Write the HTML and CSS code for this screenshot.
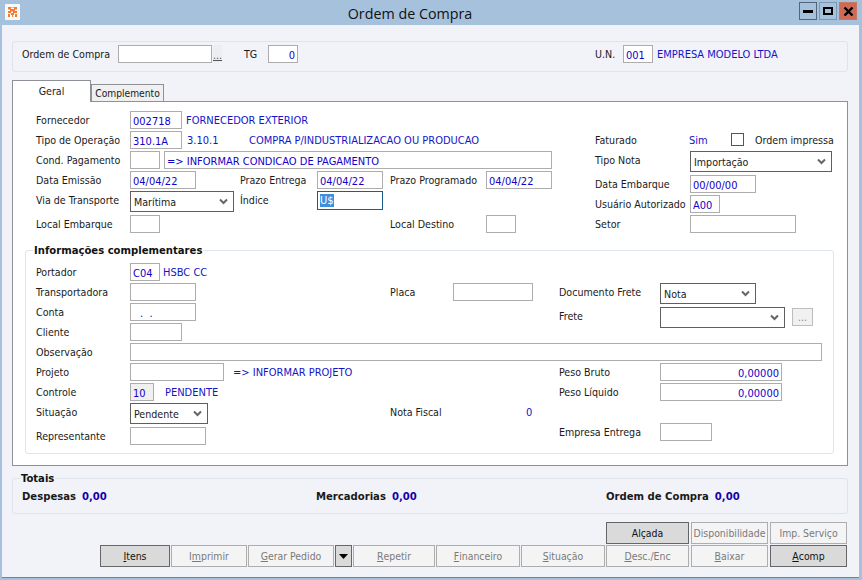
FILE: index.html
```html
<!DOCTYPE html>
<html lang="pt-BR">
<head>
<meta charset="utf-8">
<title>Ordem de Compra</title>
<link rel="stylesheet" href="styles.css">
</head>
<body>
<div class="window">
  <header class="titlebar">
    <svg class="appicon" width="15" height="16" viewBox="0 0 15 16">
      <rect x="0" y="0" width="15" height="16" rx="1" fill="#f7f9fb"/>
      <path d="M3 3h3v2H3zM9 3h3v2H9zM5 5h5v2H5zM3 7h3v2H3zM8 7h4v2H8zM6 9h3v2H6zM3 10h2v3H3zM7 11h1v2H7zM10 10h2v3h-2z" fill="#f47c30"/>
      <path d="M6 3h3v1H6zM3 5h2v1H3zM10 5h2v1h-2zM6 7h2v1H6z" fill="#fbb98c"/>
    </svg>
    <h1 class="title">Ordem de Compra</h1>
    <div class="winbtns">
      <div class="winbtn winbtn-active"><svg width="10" height="3" viewBox="0 0 10 3"><rect width="10" height="3" fill="#000"/></svg></div>
      <div class="winbtn"><svg width="10" height="8" viewBox="0 0 10 8"><path d="M0 0h10v8H0zM2 2v4h6V2z" fill="#000" fill-rule="evenodd"/></svg></div>
      <div class="winbtn winbtn-close"><svg width="11" height="9" viewBox="0 0 11 9"><path d="M1.500 .5 9.500 8.500M9.500 .5 1.500 8.500" fill="none" stroke="#000" stroke-width="2.400"/></svg></div>
    </div>
  </header>

  <main class="body">
    <section class="group topgroup">
      <span class="lbl l96">Ordem de Compra</span>
      <div class="field w94"></div>
      <span class="dots">...</span>
      <span class="lbl l24 mtg">TG</span>
      <div class="field w30 right">0</div>
      <span class="lbl l28 mun">U.N.</span>
      <div class="field w30">001</div>
      <span class="val ml4">EMPRESA MODELO LTDA</span>
    </section>

    <nav class="tabs">
      <div class="tab tab-active">Geral</div>
      <div class="tab">Complemento</div>
    </nav>

    <section class="panel">
      <div class="upper">
        <div class="upper-left">
          <div class="row"><span class="lbl l94">Fornecedor</span><div class="field w52">002718</div><span class="val ml4">FORNECEDOR EXTERIOR</span></div>
          <div class="row"><span class="lbl l94">Tipo de Operação</span><div class="field w52">310.1A</div><span class="val ml5 l62">3.10.1</span><span class="val">COMPRA P/INDUSTRIALIZACAO OU PRODUCAO</span></div>
          <div class="row"><span class="lbl l94">Cond. Pagamento</span><div class="field w30"></div><div class="field w388 ml4">=&gt; INFORMAR CONDICAO DE PAGAMENTO</div></div>
          <div class="row"><span class="lbl l94">Data Emissão</span><div class="field w66">04/04/22</div><span class="lbl l77 ml44">Prazo Entrega</span><div class="field w66">04/04/22</div><span class="lbl l96 ml7">Prazo Programado</span><div class="field w66">04/04/22</div></div>
          <div class="row row-tall"><span class="lbl l94">Via de Transporte</span><div class="select w104">Marítima<svg class="chev" width="9" height="7" viewBox="0 0 9 7"><path d="M1 1.500 4.500 5 8 1.500" fill="none" stroke="#666" stroke-width="2"/></svg></div><span class="lbl l77 ml6">Índice</span><div class="field w66 focus"><span class="sel">U$</span></div></div>
          <div class="row"><span class="lbl l94">Local Embarque</span><div class="field w30"></div><span class="lbl l96 mlocal">Local Destino</span><div class="field w30"></div></div>
        </div>
        <div class="upper-right">
          <div class="row"><span class="lbl l94">Faturado</span><span class="val l42">Sim</span><div class="check"></div><span class="lbl ml11">Ordem impressa</span></div>
          <div class="row row-tall"><span class="lbl l95">Tipo Nota</span><div class="select w142">Importação<svg class="chev" width="9" height="7" viewBox="0 0 9 7"><path d="M1 1.500 4.500 5 8 1.500" fill="none" stroke="#666" stroke-width="2"/></svg></div></div>
          <div class="row"><span class="lbl l95">Data Embarque</span><div class="field w66">00/00/00</div></div>
          <div class="row"><span class="lbl l95">Usuário Autorizado</span><div class="field w30">A00</div></div>
          <div class="row"><span class="lbl l95">Setor</span><div class="field w106"></div></div>
        </div>
      </div>

      <fieldset class="complement">
        <legend>Informações complementares</legend>
        <div class="columns">
          <div class="col col-left">
            <div class="row"><span class="lbl l94">Portador</span><div class="field w30">C04</div><span class="val ml3">HSBC CC</span></div>
            <div class="row"><span class="lbl l94">Transportadora</span><div class="field w66"></div></div>
            <div class="row"><span class="lbl l94">Conta</span><div class="field w66 conta">. &nbsp;.</div></div>
            <div class="row"><span class="lbl l94">Cliente</span><div class="field w52"></div></div>
          </div>
          <div class="col col-mid">
            <div class="row"><span class="lbl l63">Placa</span><div class="field w80"></div></div>
          </div>
          <div class="col col-right">
            <div class="row row-tall"><span class="lbl l101">Documento Frete</span><div class="select w96">Nota<svg class="chev" width="9" height="7" viewBox="0 0 9 7"><path d="M1 1.500 4.500 5 8 1.500" fill="none" stroke="#666" stroke-width="2"/></svg></div></div>
            <div class="row"><span class="lbl l101">Frete</span><div class="select w125">&nbsp;<svg class="chev" width="9" height="7" viewBox="0 0 9 7"><path d="M1 1.500 4.500 5 8 1.500" fill="none" stroke="#666" stroke-width="2"/></svg></div><div class="morebtn">...</div></div>
          </div>
        </div>
        <div class="row row-obs"><span class="lbl l94">Observação</span><div class="field w692"></div></div>
        <div class="columns">
          <div class="col col-left">
            <div class="row"><span class="lbl l94">Projeto</span><div class="field w94"></div><span class="val ml9">=&gt; INFORMAR PROJETO</span></div>
            <div class="row"><span class="lbl l94">Controle</span><div class="field w24 ro">10</div><span class="val ml11">PENDENTE</span></div>
            <div class="row row-tall"><span class="lbl l94">Situação</span><div class="select w78">Pendente<svg class="chev" width="9" height="7" viewBox="0 0 9 7"><path d="M1 1.500 4.500 5 8 1.500" fill="none" stroke="#666" stroke-width="2"/></svg></div></div>
            <div class="row"><span class="lbl l94">Representante</span><div class="field w76"></div></div>
          </div>
          <div class="col col-mid nf">
            <div class="row"><span class="lbl l136">Nota Fiscal</span><span class="val">0</span></div>
          </div>
          <div class="col col-right">
            <div class="row"><span class="lbl l101">Peso Bruto</span><div class="field w122 right">0,00000</div></div>
            <div class="row"><span class="lbl l101">Peso Líquido</span><div class="field w122 right">0,00000</div></div>
            <div class="row empresa"><span class="lbl l101">Empresa Entrega</span><div class="field w52"></div></div>
          </div>
        </div>
      </fieldset>
    </section>

    <fieldset class="totais">
      <legend>Totais</legend>
      <div class="totais-row">
        <div class="total t1"><b>Despesas</b><b class="num">0,00</b></div>
        <div class="total t2"><b>Mercadorias</b><b class="num">0,00</b></div>
        <div class="total"><b>Ordem de Compra</b><b class="num">0,00</b></div>
      </div>
    </fieldset>

    <div class="btnrow btnrow-1">
      <div class="btn on b83">Alçada</div>
      <div class="btn b77 gap2">Disponibilidade</div>
      <div class="btn b77 gap2">Imp. Serviço</div>
    </div>
    <div class="btnrow">
      <div class="btn on b70"><u>I</u>tens</div>
      <div class="btn b76">I<u>m</u>primir</div>
      <div class="btn b86"><u>G</u>erar Pedido</div>
      <div class="btn on b17"><svg width="9" height="5" viewBox="0 0 9 5"><path d="M0 0h9L4.500 5z" fill="#000"/></svg></div>
      <div class="btn b82"><u>R</u>epetir</div>
      <div class="btn b84"><u>F</u>inanceiro</div>
      <div class="btn b84"><u>S</u>ituação</div>
      <div class="btn b83"><u>D</u>esc./Enc</div>
      <div class="btn b77 gap2"><u>B</u>aixar</div>
      <div class="btn on b77 gap2"><u>A</u>comp</div>
    </div>
  </main>
</div>
</body>
</html>
```

FILE: styles.css
```css
* { box-sizing: border-box; }
html, body { margin: 0; padding: 0; width: 862px; height: 580px; overflow: hidden; }
body { font: 10.6px/18px "DejaVu Sans Condensed", "DejaVu Sans", sans-serif; color: #1a1a1a; }

.window { width: 862px; height: 580px; background: #a6c1dc; display: flex; flex-direction: column; }
.titlebar { height: 25px; flex: none; display: flex; align-items: center; position: relative; padding-left: 5px; }
.appicon { margin-top: -1px; }
.title { position: absolute; left: 0; width: 820px; top: 4px; margin: 0; text-align: center; font: 400 14.3px/20px "Open Sans", sans-serif; color: #111; }
.winbtns { margin-left: auto; display: flex; gap: 2px; margin-right: 5px; margin-top: -3px; }
.winbtn { width: 18px; height: 18px; border: 1px solid #7d96b2; display: flex; align-items: center; justify-content: center; }
.winbtn-active { border-color: #51657d; }
.winbtn-close { background: #cf6a55; border-color: #c8775f; }

.body { margin: 0 3px 0 2px; height: 553px; flex: none; background: #f1f3f9; padding: 16px 11px 0 10px; border-bottom: 1px solid #6486a5; }

.group { border: 1px solid #dfe3ea; border-radius: 3px; }
.topgroup { height: 31px; display: flex; padding: 3px 0 0 9px; }

.lbl { flex: none; white-space: nowrap; }
.val { flex: none; white-space: nowrap; color: #1414c8; font-size: 11px; padding-top: 1px; }
.field { flex: none; height: 18px; border: 1px solid #adadad; background: #fff; color: #1400c8; font-size: 11px; padding: 1px 2px 0; line-height: 17px; white-space: nowrap; overflow: hidden; }
.right { text-align: right; }
.ro { background: #f0f0f0; }
.focus { border-color: #1c5d8a; height: 19px; padding-top: 0; }
.sel { background: #3e8fdc; color: #fff; }
.dots { width: 9px; margin-left: 1px; color: #555; line-height: 20px; background: #eceef3; height: 18px; text-decoration: underline; }
.conta { padding-left: 9px; }

.l24 { width: 24px; } .l28 { width: 28px; } .l42 { width: 42px; } .l62 { width: 62px; } .l63 { width: 63px; }
.l77 { width: 77px; } .l94 { width: 94px; } .l95 { width: 95px; } .l96 { width: 96px; } .l101 { width: 101px; } .l136 { width: 136px; }
.w24 { width: 24px; } .w30 { width: 30px; } .w52 { width: 52px; } .w66 { width: 66px; } .w76 { width: 76px; } .w78 { width: 78px; }
.w80 { width: 80px; } .w94 { width: 94px; } .w96 { width: 96px; } .w104 { width: 104px; } .w106 { width: 106px; } .w122 { width: 122px; }
.w125 { width: 125px; } .w142 { width: 142px; } .w388 { width: 388px; } .w692 { width: 692px; }
.ml3 { margin-left: 3px; } .ml4 { margin-left: 4px; } .ml5 { margin-left: 5px; } .ml6 { margin-left: 6px; } .ml7 { margin-left: 7px; }
.ml9 { margin-left: 9px; } .ml11 { margin-left: 11px; } .ml44 { margin-left: 44px; }
.mtg { margin-left: 22px; } .mun { margin-left: 297px; } .mlocal { margin-left: 230px; }

.tabs { display: flex; align-items: flex-end; margin-top: 9px; height: 20px; position: relative; z-index: 1; }
.tab { height: 17px; width: 73px; border: 1px solid #8e9197; border-bottom: 0; background: #f0f0f0; text-align: center; line-height: 17px; font-size: 10.2px; }
.tab-active { width: 79px; height: 22px; margin-bottom: -1px; background: #fff; line-height: 20px; font-size: 10.6px; }

.panel { height: 365px; border: 1px solid #8e9197; background: #fff; }
.upper { display: flex; padding: 9px 0 0 23px; }
.upper-left { width: 559px; flex: none; }
.upper-right { padding-top: 20px; flex: none; }

.row { display: flex; height: 20px; align-items: flex-start; }
.row-tall { height: 24px; }
.select { flex: none; height: 21px; border: 1px solid #5f5f5f; background: #fff; display: flex; align-items: center; justify-content: space-between; padding: 0 5px 0 3px; color: #1a1a1a; }
.chev { margin-top: 0; }
.check { width: 13px; height: 13px; border: 1px solid #555; margin-top: 2px; flex: none; }
.morebtn { width: 21px; height: 18px; margin: 1px 0 0 7px; border: 1px solid #bdbdbd; background: #f1f1f1; color: #888; text-align: center; line-height: 17px; flex: none; }

fieldset { margin: 0; padding: 0; min-width: 0; }
.complement { margin: 8px 13px 0 12px; height: 211px; border: 1px solid #dfe5ec; border-radius: 3px; padding: 5px 0 0 10px; }
.complement legend, .totais legend { font-weight: 700; font-size: 11.2px; line-height: 14px; color: #111; padding: 1px 1px 0; }
.complement legend { margin-left: -3px; }
.totais legend { margin-left: -2px; }
.columns { display: flex; }
.col { flex: none; }
.col-left { width: 354px; }
.col-mid { width: 169px; padding-top: 20px; }
.col-right { padding-top: 20px; }
.columns + .row + .columns .col-right { padding-top: 0; }
.nf { padding-top: 40px; }
.empresa { margin-top: 20px; }

.totais { margin: 5px 0 0 0; height: 43px; border: 1px solid #dfe3ea; border-radius: 3px; padding: 2px 0 0 9px; }
.totais-row { display: flex; font-weight: 700; font-size: 11.200px; }
.total { display: flex; gap: 6px; flex: none; }
.t1 { width: 294px; }
.t2 { width: 290px; }
.num { color: #1400aa; }

.btnrow { display: flex; justify-content: flex-end; gap: 1px; margin: 1px 1px 0 0; font-size: 10.4px; }
.btnrow-1 { margin-top: 8px; }
.gap2 { margin-left: 1px; }
.btn { flex: none; height: 22px; border: 1px solid #adadad; background: #f4f4f4; color: #7a7a7a; display: flex; align-items: center; justify-content: center; line-height: 18px; white-space: pre; }
.btn.on { background: #dadada; border-color: #666; color: #111; }
.b17 { width: 17px; } .b70 { width: 70px; } .b76 { width: 76px; } .b77 { width: 77px; } .b82 { width: 82px; } .b83 { width: 83px; } .b84 { width: 84px; } .b86 { width: 86px; }
```
